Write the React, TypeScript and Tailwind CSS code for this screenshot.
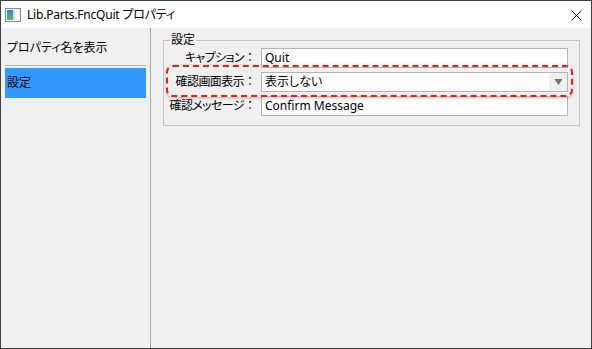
import React from "react";

const font = {
  fontFamily: '"Noto Sans", "Noto Sans CJK JP", sans-serif',
};

function AppIcon() {
  return (
    <svg width="16" height="14" viewBox="0 0 16 14" className="block">
      <defs>
        <linearGradient id="g1" x1="0" y1="0" x2="0" y2="1">
          <stop offset="0" stopColor="#3b86c9" />
          <stop offset="1" stopColor="#5fb36a" />
        </linearGradient>
      </defs>
      <rect x="0.5" y="0.5" width="15" height="13" fill="#f4f4f4" stroke="#8a8a8a" />
      <rect x="2" y="2" width="6" height="10" fill="url(#g1)" />
      <rect x="8" y="2" width="2" height="10" fill="#cfe3d3" />
      <rect x="11" y="2" width="3" height="10" fill="#ffffff" />
    </svg>
  );
}

function CloseIcon() {
  return (
    <svg width="11" height="11" viewBox="0 0 11 11" className="block">
      <path d="M0.5 0.5 L10.5 10.5 M10.5 0.5 L0.5 10.5" stroke="#111" strokeWidth="1" />
    </svg>
  );
}

function Arrow() {
  return (
    <svg width="7" height="6" viewBox="0 0 7 6" className="block">
      <rect x="0" y="0" width="7" height="1" fill="#707070" />
      <path d="M0 1 H7 L3.5 6 Z" fill="#707070" />
    </svg>
  );
}

function Label({ text }: { text: string }) {
  return (
    <div className="text-right leading-none whitespace-nowrap tracking-[-0.6px]">
      {text}
      <span className="[font-feature-settings:normal] tracking-normal">：</span>
    </div>
  );
}

export default function App() {
  return (
    <div
      className="w-[592px] h-[349px] border border-[#3f3f3f] bg-[#f0f0f0] flex flex-col text-[12px] text-black overflow-hidden [font-feature-settings:'palt']"
      style={font}
    >
      {/* Title bar */}
      <div className="h-[27px] bg-white flex items-center shrink-0">
        <div className="ml-[4px]">
          <AppIcon />
        </div>
        <div className="ml-[6px] leading-none text-[12px] tracking-[-0.2px]">Lib.Parts.FncQuit プロパティ</div>
        <div className="ml-auto mr-[9px] mt-[1px]">
          <CloseIcon />
        </div>
      </div>

      {/* Body */}
      <div className="flex flex-1 min-h-0">
        {/* Left panel */}
        <div className="w-[150px] shrink-0 border-r border-[#a6a6a6] pt-[5px] px-[4px] flex flex-col">
          <div className="h-[30px] flex items-center pl-[2px]">プロパティ名を表示</div>
          <div className="mt-[2px] h-px bg-[#b0b0b0]" />
          <div className="mt-[2px] h-[30px] flex items-center pl-[2px] bg-[#3399ff]">設定</div>
        </div>

        {/* Right panel */}
        <div className="flex-1 pt-[12px] pl-[12px] pr-[11px]">
          <div className="relative border border-[#c4c4c4] pt-[7px] pb-[9px] pr-[11px]">
            <div className="absolute -top-[8px] left-[6px] px-[1px] bg-[#f0f0f0] leading-[14px]">設定</div>

            <div className="grid grid-cols-[92px_1fr] gap-x-[5px] gap-y-[4px] items-center">
              <Label text="キャプション" />
              <div className="h-[20px] border border-[#b4b4b4] bg-white flex items-center pl-[3px] leading-none">Quit</div>

              <Label text="確認画面表示" />
              <div className="h-[20px] border border-[#b4b4b4] bg-white flex items-center leading-none">
                <div className="pl-[3px] flex-1">表示しない</div>
                <div className="w-[18px] h-full bg-[#f0f0f0] flex items-center justify-center">
                  <Arrow />
                </div>
              </div>

              <Label text="確認メッセージ" />
              <div className="h-[20px] border border-[#b4b4b4] bg-white flex items-center pl-[3px] leading-none">Confirm Message</div>
            </div>

            {/* annotation overlay */}
            <div className="absolute left-[2px] top-[24px] w-[407px] h-[32px] border-2 border-dashed border-[#f01818] rounded-[7px] shadow-[0_1px_3px_rgba(0,0,0,0.25)] pointer-events-none" />
          </div>
        </div>
      </div>
    </div>
  );
}
